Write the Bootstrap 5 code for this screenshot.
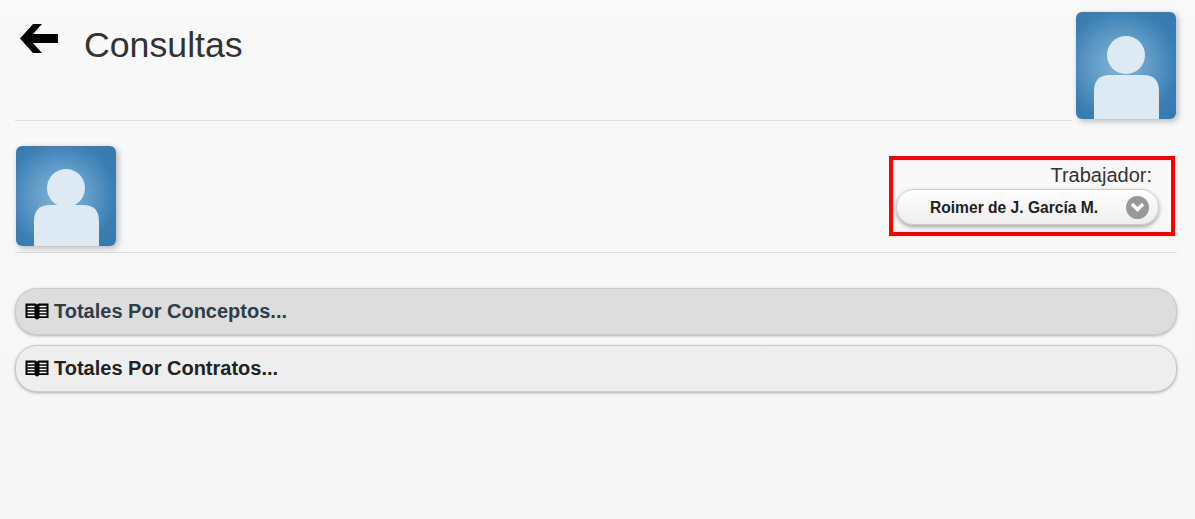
<!DOCTYPE html>
<html lang="es">
<head>
<meta charset="utf-8">
<title>Consultas</title>
<link href="https://cdn.jsdelivr.net/npm/bootstrap@5.3.0/dist/css/bootstrap.min.css" rel="stylesheet">
<style>
html,body{height:100%}
body{background:linear-gradient(#f9f9f9,#f8f8f8 200px,#f6f6f6);font-family:"Liberation Sans",Arial,sans-serif;color:#222;overflow:hidden}
.pg{padding:0 18px 0 15px}
.top-head{height:121px;margin-right:1px}
.top-left{height:121px;border-bottom:1px solid #ddd;padding-left:5px;padding-top:24px}
.top-title{font-size:35.7px;font-weight:400;line-height:40px;margin:1px 0 0 24px;color:#333}
.pic{display:block;width:100px;height:100px;border-radius:6px;box-shadow:2px 2px 6px rgba(0,0,0,.28);background:radial-gradient(circle at 45% 50%,#86b7d8 0,#5f9ac6 40%,#3a7fb4 72%,#3479ae 100%)}
.pic-tall{height:107px;margin:12px 0 0 4px}
.who-row{height:132px;border-bottom:1px solid #ddd;padding:25px 2px 0 1px}
.red-box{width:286px;height:80px;border:4px solid #f00;margin-top:10px;padding:2px 3px 0}
.lab{font-size:20px;line-height:27px;text-align:right;padding-right:16px;color:#333}
.pill-sel{height:36px;border:1px solid #ccc;border-radius:18px;background:linear-gradient(#fff,#eee);box-shadow:0 2px 4px rgba(0,0,0,.35);font-size:15.6px;font-weight:700;padding:0 9px 0 33px;color:#222;width:263px}
.pill-name{margin-top:2px}
.chev{width:23px;height:23px;border-radius:50%;background:#999}
.acc{height:47px;border:1px solid #ccc;border-radius:22px;box-shadow:0 1px 3px rgba(0,0,0,.3);font-size:20px;font-weight:700;padding-left:9px;gap:5px}
.acc-txt{margin-bottom:2px}
.acc-on{background:#ddd;color:#2f3e46;margin-top:35px}
.acc-off{background:#eee;color:#222;margin-top:10px}
.acc svg{flex:none}
</style>
</head>
<body>
<div class="pg">
  <div class="top-head d-flex">
    <div class="top-left flex-grow-1 d-flex align-items-start">
      <svg width="40" height="30" viewBox="0 0 40 30" aria-label="Volver"><path d="M0 14.500 13 0h9L13 10h25v9H13l9 10h-9z" fill="#000"/></svg>
      <h1 class="top-title">Consultas</h1>
    </div>
    <svg class="pic pic-tall" viewBox="0 0 100 107"><circle cx="50" cy="43" r="19" fill="#deeaf3"/><path d="M18 107V79q0-16 16-16h33q16 0 16 16v28z" fill="#deeaf3"/></svg>
  </div>
  <div class="who-row d-flex justify-content-between align-items-start">
    <svg class="pic" viewBox="0 0 100 100"><circle cx="50" cy="42" r="19" fill="#deeaf3"/><path d="M18 100V75q0-16 16-16h33q16 0 16 16v25z" fill="#deeaf3"/></svg>
    <div class="red-box">
      <div class="lab">Trabajador:</div>
      <div class="pill-sel d-flex align-items-center justify-content-between">
        <span class="pill-name">Roimer de J. García M.</span>
        <span class="chev d-flex align-items-center justify-content-center"><svg width="15" height="11" viewBox="0 0 15 11"><path d="M2 2 7.500 7.500 13 2" fill="none" stroke="#fff" stroke-width="3.500"/></svg></span>
      </div>
    </div>
  </div>
  <div class="acc acc-on d-flex align-items-center">
    <svg width="24" height="17" viewBox="0 0 24 17"><path d="M.5 .5h10L12 1.500 13.500 .5h10v14.500H14.500L12 16.800 9.500 15H.5z" fill="#000"/><path d="M2.500 3.500h7M2.500 6.500h7M2.500 9.500h7M2.500 12.500h7M14.500 3.500h7M14.500 6.500h7M14.500 9.500h7M14.500 12.500h7" stroke="#fff" stroke-width="1.500"/></svg>
    <span class="acc-txt">Totales Por Conceptos...</span>
  </div>
  <div class="acc acc-off d-flex align-items-center">
    <svg width="24" height="17" viewBox="0 0 24 17"><path d="M.5 .5h10L12 1.500 13.500 .5h10v14.500H14.500L12 16.800 9.500 15H.5z" fill="#000"/><path d="M2.500 3.500h7M2.500 6.500h7M2.500 9.500h7M2.500 12.500h7M14.500 3.500h7M14.500 6.500h7M14.500 9.500h7M14.500 12.500h7" stroke="#fff" stroke-width="1.500"/></svg>
    <span class="acc-txt">Totales Por Contratos...</span>
  </div>
</div>
<script src="https://cdn.jsdelivr.net/npm/bootstrap@5.3.0/dist/js/bootstrap.bundle.min.js"></script>
</body>
</html>
